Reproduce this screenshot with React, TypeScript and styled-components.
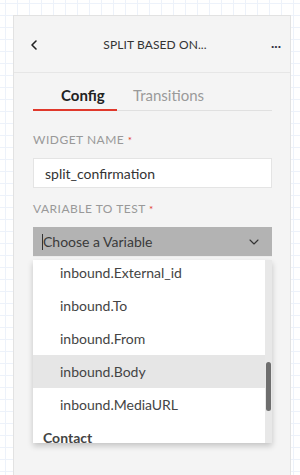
import React from "react";
import styled, { createGlobalStyle } from "styled-components";
import { ChevronLeft, ChevronDown } from "lucide-react";

const options = [
  "inbound.External_id",
  "inbound.To",
  "inbound.From",
  "inbound.Body",
  "inbound.MediaURL",
];

const App = () => {
  return (
    <>
      <GlobalStyle />
      <Canvas>
        <Panel>
          <Header>
            <IconButton>
              <ChevronLeft size={16} strokeWidth={2.4} />
            </IconButton>
            <Title>Split Based On...</Title>
            <More>...</More>
          </Header>
          <Body>
            <Tabs>
              <Tab active>Config</Tab>
              <Tab>Transitions</Tab>
            </Tabs>
            <Label>
              Widget Name <Req>*</Req>
            </Label>
            <Input>split_confirmation</Input>
            <Label>
              Variable to Test <Req>*</Req>
            </Label>
            <Select>
              <Caret />
              <SelectText>Choose a Variable</SelectText>
              <ChevronDown size={16} strokeWidth={1.6} />
            </Select>
            <Dropdown>
              <List>
                {options.map((o, i) => (
                  <Option key={o} selected={o === "inbound.Body"} first={i === 0}>
                    {o}
                  </Option>
                ))}
                <Group>Contact</Group>
              </List>
              <Track>
                <Thumb />
              </Track>
            </Dropdown>
          </Body>
        </Panel>
      </Canvas>
    </>
  );
};

export default App;

const GlobalStyle = createGlobalStyle`
  html, body {
    margin: 0;
    padding: 0;
  }
  body {
    font-family: Lato, "Open Sans", sans-serif;
    background: #fff;
  }
`;

const Canvas = styled.div`
  width: 300px;
  height: 475px;
  overflow: hidden;
  padding: 15px 0 0 13px;
  box-sizing: border-box;
  background-color: #fff;
  background-image: linear-gradient(#edf2fa 1px, transparent 1px),
    linear-gradient(90deg, #edf2fa 1px, transparent 1px);
  background-size: 12px 12px;
  background-position: 5px 3px;
`;

const Panel = styled.div`
  width: 278px;
  height: 480px;
  box-sizing: border-box;
  background: #f4f4f4;
  border: 1px solid #e2e2e2;
  border-bottom: none;
`;

const Header = styled.div`
  height: 57px;
  display: flex;
  align-items: center;
  padding: 0 9px 0 12px;
  border-bottom: 1px solid #e6e6e6;
  box-sizing: border-box;
  color: #222;
`;

const IconButton = styled.div`
  display: flex;
  align-items: center;
  width: 20px;
  margin-top: 1px;
`;

const Title = styled.div`
  flex: 1;
  text-align: center;
  font-size: 12px;
  text-transform: uppercase;
  color: #333;
  letter-spacing: 0.1px;
  padding-left: 3px;
`;

const More = styled.div`
  width: 20px;
  font-size: 14px;
  font-weight: 700;
  color: #334;
  text-align: right;
  margin-bottom: 4px;
`;

const Body = styled.div`
  padding: 0 18px 0 19px;
`;

const Tabs = styled.div`
  display: flex;
  height: 37px;
  border-bottom: 1px solid #e0e0e0;
  margin-bottom: 22px;
`;

const Tab = styled.div<{ active?: boolean }>`
  display: flex;
  align-items: center;
  box-sizing: border-box;
  font-size: 15px;
  font-weight: ${(p) => (p.active ? 700 : 400)};
  color: ${(p) => (p.active ? "#222" : "#9a9a9a")};
  width: ${(p) => (p.active ? "84px" : "auto")};
  padding-left: ${(p) => (p.active ? "28px" : "16px")};
  padding-top: 8px;
  margin-bottom: -1px;
  border-bottom: 2px solid ${(p) => (p.active ? "#e0382b" : "transparent")};
`;

const Label = styled.div`
  font-size: 12px;
  text-transform: uppercase;
  letter-spacing: 0.5px;
  color: #999;
  height: 14px;
  line-height: 14px;
  margin-bottom: 11px;
`;

const Req = styled.span`
  color: #e0382b;
  font-size: 10px;
  vertical-align: top;
`;

const Input = styled.div`
  height: 30px;
  box-sizing: border-box;
  background: #fff;
  border: 1px solid #e4e4e4;
  padding: 0 11px;
  display: flex;
  align-items: center;
  font-size: 14px;
  color: #333;
  margin-bottom: 14px;
`;

const Select = styled.div`
  height: 30px;
  box-sizing: border-box;
  background: #b3b3b3;
  border-bottom: 1px solid #ececec;
  display: flex;
  align-items: center;
  padding: 0 10px 0 9px;
  color: #333;
`;

const Caret = styled.span`
  width: 1px;
  height: 16px;
  background: #333;
`;

const SelectText = styled.span`
  flex: 1;
  font-size: 14px;
  color: #3a3a3a;
`;

const Dropdown = styled.div`
  margin-top: 3px;
  height: 183px;
  display: flex;
  background: #fff;
  box-shadow: 0 3px 6px rgba(0, 0, 0, 0.2);
  overflow: hidden;
`;

const List = styled.div`
  flex: 1;
  display: flex;
  flex-direction: column;
`;

const Option = styled.div<{ selected?: boolean; first?: boolean }>`
  flex: none;
  height: ${(p) => (p.first ? "29px" : "33px")};
  padding: ${(p) => (p.first ? "0 0 4px 27px" : "0 0 0 27px")};
  box-sizing: border-box;
  display: flex;
  align-items: center;
  font-size: 14px;
  color: #444;
  background: ${(p) => (p.selected ? "#e6e6e6" : "#fff")};
`;

const Group = styled.div`
  flex: none;
  height: 26px;
  padding: 8px 0 0 10px;
  box-sizing: border-box;
  font-size: 14px;
  line-height: 17px;
  font-weight: 700;
  color: #444;
`;

const Track = styled.div`
  width: 7px;
  background: #e8e8e8;
  display: flex;
  flex-direction: column;
  align-items: center;
`;

const Thumb = styled.div`
  width: 5px;
  height: 49px;
  margin-top: 102px;
  border-radius: 3px;
  background: #6e6e6e;
`;
